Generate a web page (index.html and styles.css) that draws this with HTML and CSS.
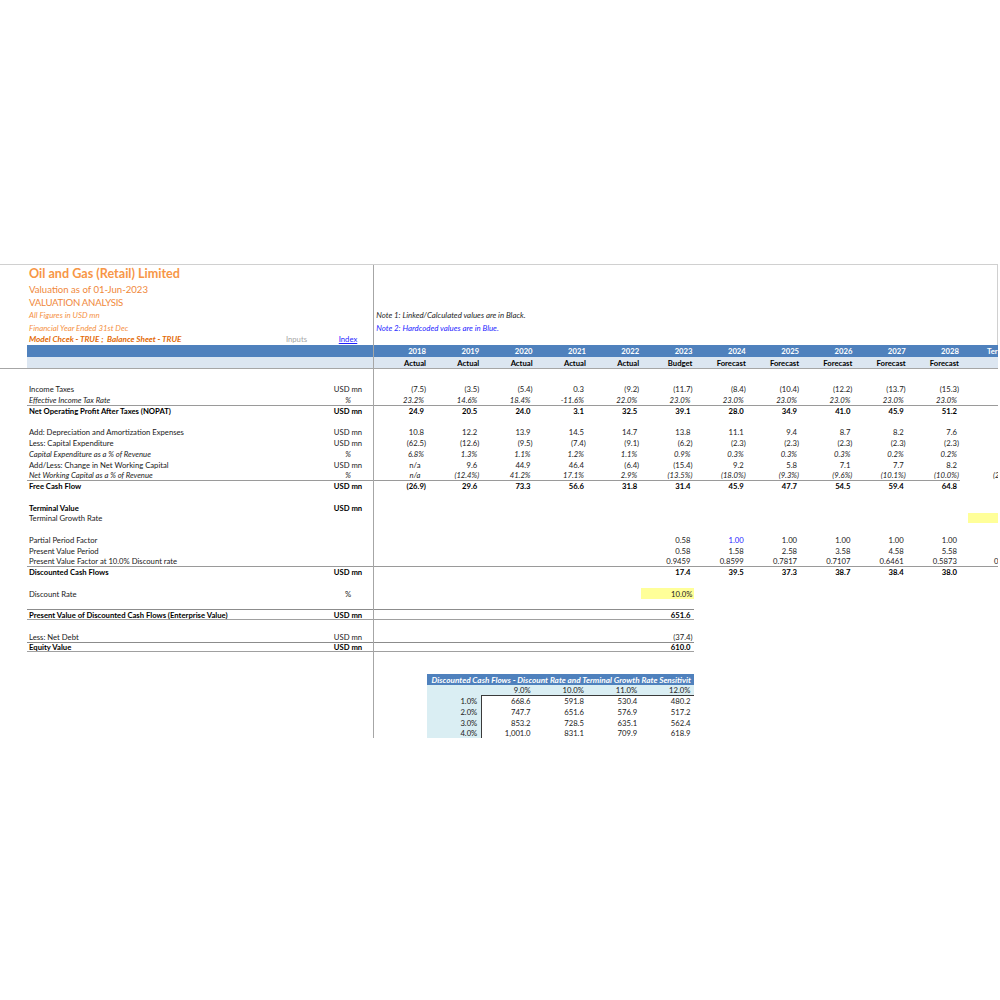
FILE: index.html
```html
<!DOCTYPE html>
<html>
<head>
<meta charset="utf-8">
<title>Oil and Gas (Retail) Limited - Valuation</title>
<link rel="stylesheet" href="styles.css">
</head>
<body>
<div class="sheet">
<table class="grid">
<colgroup>
<col class="ca"><col class="cb"><col class="cc"><col class="cd">
<col class="cy"><col class="cy"><col class="cy"><col class="cy"><col class="cy"><col class="cy"><col class="cy"><col class="cy"><col class="cy"><col class="cy"><col class="cy">
<col class="cs"><col class="ct">
</colgroup>
<tbody>
<tr class="top h18"><td></td><td class="l title">Oil and Gas (Retail) Limited</td><td></td><td class="fz"></td><td colspan="12"></td><td class="edge"></td></tr>
<tr class="top h13"><td></td><td class="l sub">Valuation as of 01-Jun-2023</td><td></td><td class="fz"></td><td colspan="12"></td><td class="edge"></td></tr>
<tr class="top h13"><td></td><td class="l sub caps">VALUATION ANALYSIS</td><td></td><td class="fz"></td><td colspan="12"></td><td class="edge"></td></tr>
<tr class="top h13"><td></td><td class="l info">All Figures in USD mn</td><td></td><td class="fz"></td><td colspan="12" class="note">Note 1: Linked/Calculated values are in Black.</td><td class="edge"></td></tr>
<tr class="top h12"><td></td><td class="l info">Financial Year Ended 31st Dec</td><td></td><td class="fz"></td><td colspan="12" class="note blue">Note 2: Hardcoded values are in Blue.</td><td class="edge"></td></tr>
<tr class="top h11"><td></td><td class="l"><div class="chk"><span class="check">Model Chcek - TRUE ;&nbsp; Balance Sheet - TRUE</span><span class="inputs">Inputs</span></div></td><td class="u"><span class="link">Index</span></td><td class="fz"></td><td colspan="12"></td><td class="edge"></td></tr>
<tr class="band"><td></td><td></td><td></td><td class="fz"></td>
<td class="n m">2018</td><td class="n m">2019</td><td class="n m">2020</td><td class="n m">2021</td><td class="n m">2022</td><td class="n m">2023</td><td class="n m">2024</td><td class="n m">2025</td><td class="n m">2026</td><td class="n m">2027</td><td class="n m">2028</td><td></td><td class="term">Ter</td></tr>
<tr class="band2"><td class="a"></td><td></td><td></td><td class="fz"></td>
<td class="n m">Actual</td><td class="n m">Actual</td><td class="n m">Actual</td><td class="n m">Actual</td><td class="n m">Actual</td><td class="n m">Budget</td><td class="n m">Forecast</td><td class="n m">Forecast</td><td class="n m">Forecast</td><td class="n m">Forecast</td><td class="n m">Forecast</td><td></td><td></td></tr>
<tr class="gap"><td></td><td></td><td></td><td class="fz"></td><td colspan="13"></td></tr>

<tr><td></td><td class="l">Income Taxes</td><td class="u">USD mn</td><td class="fz"></td>
<td class="n m">(7.5)</td><td class="n m">(3.5)</td><td class="n m">(5.4)</td><td class="n">0.3</td><td class="n m">(9.2)</td><td class="n m">(11.7)</td><td class="n m">(8.4)</td><td class="n m">(10.4)</td><td class="n m">(12.2)</td><td class="n m">(13.7)</td><td class="n m">(15.3)</td><td></td><td></td></tr>
<tr class="it"><td></td><td class="l">Effective Income Tax Rate</td><td class="u">%</td><td class="fz"></td>
<td class="n">23.2%</td><td class="n">14.6%</td><td class="n">18.4%</td><td class="n">-11.6%</td><td class="n">22.0%</td><td class="n">23.0%</td><td class="n">23.0%</td><td class="n">23.0%</td><td class="n">23.0%</td><td class="n">23.0%</td><td class="n">23.0%</td><td></td><td></td></tr>
<tr class="b tt"><td class="a"></td><td class="l">Net Operating Profit After Taxes (NOPAT)</td><td class="u">USD mn</td><td class="fz"></td>
<td class="n">24.9</td><td class="n">20.5</td><td class="n">24.0</td><td class="n">3.1</td><td class="n">32.5</td><td class="n">39.1</td><td class="n">28.0</td><td class="n">34.9</td><td class="n">41.0</td><td class="n">45.9</td><td class="n">51.2</td><td></td><td></td></tr>
<tr><td></td><td></td><td></td><td class="fz"></td><td colspan="13"></td></tr>
<tr><td></td><td class="l">Add: Depreciation and Amortization Expenses</td><td class="u">USD mn</td><td class="fz"></td>
<td class="n">10.8</td><td class="n">12.2</td><td class="n">13.9</td><td class="n">14.5</td><td class="n">14.7</td><td class="n">13.8</td><td class="n">11.1</td><td class="n">9.4</td><td class="n">8.7</td><td class="n">8.2</td><td class="n">7.6</td><td></td><td></td></tr>
<tr><td></td><td class="l">Less: Capital Expenditure</td><td class="u">USD mn</td><td class="fz"></td>
<td class="n m">(62.5)</td><td class="n m">(12.6)</td><td class="n m">(9.5)</td><td class="n m">(7.4)</td><td class="n m">(9.1)</td><td class="n m">(6.2)</td><td class="n m">(2.3)</td><td class="n m">(2.3)</td><td class="n m">(2.3)</td><td class="n m">(2.3)</td><td class="n m">(2.3)</td><td></td><td></td></tr>
<tr class="it"><td></td><td class="l">Capital Expenditure as a % of Revenue</td><td class="u">%</td><td class="fz"></td>
<td class="n">6.8%</td><td class="n">1.3%</td><td class="n">1.1%</td><td class="n">1.2%</td><td class="n">1.1%</td><td class="n">0.9%</td><td class="n">0.3%</td><td class="n">0.3%</td><td class="n">0.3%</td><td class="n">0.2%</td><td class="n">0.2%</td><td></td><td></td></tr>
<tr><td></td><td class="l">Add/Less: Change in Net Working Capital</td><td class="u">USD mn</td><td class="fz"></td>
<td class="n na">n/a</td><td class="n">9.6</td><td class="n">44.9</td><td class="n">46.4</td><td class="n m">(6.4)</td><td class="n m">(15.4)</td><td class="n">9.2</td><td class="n">5.8</td><td class="n">7.1</td><td class="n">7.7</td><td class="n">8.2</td><td></td><td></td></tr>
<tr class="it"><td></td><td class="l">Net Working Capital as a % of Revenue</td><td class="u">%</td><td class="fz"></td>
<td class="n na">n/a</td><td class="n m">(12.4%)</td><td class="n">41.2%</td><td class="n">17.1%</td><td class="n">2.9%</td><td class="n m">(13.5%)</td><td class="n m">(18.0%)</td><td class="n m">(9.3%)</td><td class="n m">(9.6%)</td><td class="n m">(10.1%)</td><td class="n m">(10.0%)</td><td></td><td class="cut">(2</td></tr>
<tr class="b tt"><td class="a"></td><td class="l">Free Cash Flow</td><td class="u">USD mn</td><td class="fz"></td>
<td class="n m">(26.9)</td><td class="n">29.6</td><td class="n">73.3</td><td class="n">56.6</td><td class="n">31.8</td><td class="n">31.4</td><td class="n">45.9</td><td class="n">47.7</td><td class="n">54.5</td><td class="n">59.4</td><td class="n">64.8</td><td class="x"></td><td class="x"></td></tr>
<tr><td></td><td></td><td></td><td class="fz"></td><td colspan="13"></td></tr>
<tr class="b"><td></td><td class="l">Terminal Value</td><td class="u">USD mn</td><td class="fz"></td><td colspan="13"></td></tr>
<tr><td></td><td class="l">Terminal Growth Rate</td><td></td><td class="fz"></td>
<td></td><td></td><td></td><td></td><td></td><td></td><td></td><td></td><td></td><td></td><td></td><td></td><td class="hl"></td></tr>
<tr><td></td><td></td><td></td><td class="fz"></td><td colspan="13"></td></tr>
<tr><td></td><td class="l">Partial Period Factor</td><td></td><td class="fz"></td>
<td></td><td></td><td></td><td></td><td></td><td class="n">0.58</td><td class="n blue">1.00</td><td class="n">1.00</td><td class="n">1.00</td><td class="n">1.00</td><td class="n">1.00</td><td></td><td></td></tr>
<tr><td></td><td class="l">Present Value Period</td><td></td><td class="fz"></td>
<td></td><td></td><td></td><td></td><td></td><td class="n">0.58</td><td class="n">1.58</td><td class="n">2.58</td><td class="n">3.58</td><td class="n">4.58</td><td class="n">5.58</td><td></td><td></td></tr>
<tr><td></td><td class="l">Present Value Factor at 10.0% Discount rate</td><td></td><td class="fz"></td>
<td></td><td></td><td></td><td></td><td></td><td class="n">0.9459</td><td class="n">0.8599</td><td class="n">0.7817</td><td class="n">0.7107</td><td class="n">0.6461</td><td class="n">0.5873</td><td></td><td class="cut0">0</td></tr>
<tr class="b tt"><td class="a"></td><td class="l">Discounted Cash Flows</td><td class="u">USD mn</td><td class="fz"></td>
<td></td><td></td><td></td><td></td><td></td><td class="n">17.4</td><td class="n">39.5</td><td class="n">37.3</td><td class="n">38.7</td><td class="n">38.4</td><td class="n">38.0</td><td></td><td></td></tr>
<tr><td></td><td></td><td></td><td class="fz"></td><td colspan="13"></td></tr>
<tr><td></td><td class="l">Discount Rate</td><td class="u">%</td><td class="fz"></td>
<td></td><td></td><td></td><td></td><td></td><td class="n m hl">10.0%</td><td></td><td></td><td></td><td></td><td></td><td></td><td></td></tr>
<tr><td></td><td></td><td></td><td class="fz"></td><td colspan="13"></td></tr>
<tr class="b tb"><td class="a"></td><td class="l">Present Value of Discounted Cash Flows (Enterprise Value)</td><td class="u">USD mn</td><td class="fz"></td>
<td></td><td></td><td></td><td></td><td></td><td class="n">651.6</td><td class="x"></td><td class="x"></td><td class="x"></td><td class="x"></td><td class="x"></td><td class="x"></td><td class="x"></td></tr>
<tr><td></td><td></td><td></td><td class="fz"></td><td colspan="13"></td></tr>
<tr><td></td><td class="l">Less: Net Debt</td><td class="u">USD mn</td><td class="fz"></td>
<td></td><td></td><td></td><td></td><td></td><td class="n m">(37.4)</td><td></td><td></td><td></td><td></td><td></td><td></td><td></td></tr>
<tr class="b tb"><td class="a"></td><td class="l">Equity Value</td><td class="u">USD mn</td><td class="fz"></td>
<td></td><td></td><td></td><td></td><td></td><td class="n">610.0</td><td class="x"></td><td class="x"></td><td class="x"></td><td class="x"></td><td class="x"></td><td class="x"></td><td class="x"></td></tr>
<tr><td></td><td></td><td></td><td class="fz"></td><td colspan="13"></td></tr>
<tr><td></td><td></td><td></td><td class="fz"></td><td colspan="13"></td></tr>

<tr><td></td><td></td><td></td><td class="fz"></td><td></td>
<td colspan="5" class="sens-title"><div class="clip">Discounted Cash Flows - Discount Rate and Terminal Growth Rate Sensitivit</div></td><td colspan="7"></td></tr>
<tr><td></td><td></td><td></td><td class="fz"></td><td></td>
<td class="sh"></td><td class="n sh">9.0%</td><td class="n sh">10.0%</td><td class="n sh">11.0%</td><td class="n sh">12.0%</td><td colspan="7"></td></tr>
<tr><td></td><td></td><td></td><td class="fz"></td><td></td>
<td class="n sh">1.0%</td><td class="n sd tl">668.6</td><td class="n sd t">591.8</td><td class="n sd t">530.4</td><td class="n sd t">480.2</td><td colspan="7"></td></tr>
<tr><td></td><td></td><td></td><td class="fz"></td><td></td>
<td class="n sh">2.0%</td><td class="n sd lft">747.7</td><td class="n sd">651.6</td><td class="n sd">576.9</td><td class="n sd">517.2</td><td colspan="7"></td></tr>
<tr><td></td><td></td><td></td><td class="fz"></td><td></td>
<td class="n sh">3.0%</td><td class="n sd lft">853.2</td><td class="n sd">728.5</td><td class="n sd">635.1</td><td class="n sd">562.4</td><td colspan="7"></td></tr>
<tr><td></td><td></td><td></td><td class="fz"></td><td></td>
<td class="n sh">4.0%</td><td class="n sd lft">1,001.0</td><td class="n sd">831.1</td><td class="n sd">709.9</td><td class="n sd">618.9</td><td colspan="7"></td></tr>
</tbody>
</table>
</div>
</body>
</html>
```

FILE: styles.css
```css
html, body {
  margin: 0;
  padding: 0;
  background: #ffffff;
}

body {
  font-family: Lato, "Liberation Sans", sans-serif;
}

.sheet {
  margin-top: 264px;
  width: 998px;
  height: 474px;
  overflow: hidden;
  border-top: 1px solid #d0d0d0;
}

.grid {
  table-layout: fixed;
  border-collapse: collapse;
  width: 1008px;
}

.ca { width: 27px; }
.cb { width: 303px; }
.cc { width: 36px; }
.cd { width: 8.2px; }
.cy { width: 53.3px; }
.cs { width: 7.5px; }
.ct { width: 40px; }

.grid td {
  padding: 0;
  height: 10.75px;
  line-height: 10px;
  font-size: 7.7px;
  white-space: nowrap;
  color: #1a1a1a;
  vertical-align: bottom;
}

.grid tr.top td { vertical-align: middle; }
.grid tr.h18 td { height: 18px; line-height: 18px; }
.grid tr.h13 td { height: 13px; line-height: 13px; }
.grid tr.h12 td { height: 12px; line-height: 12px; }
.grid tr.h11 td { height: 11px; line-height: 11px; }
.grid tr.gap td { height: 14.6px; }

.grid td.edge {
  background: linear-gradient(to right, transparent 29.5px, #d0d0d0 29.5px, #d0d0d0 30.5px, transparent 30.5px);
}

.grid td.fz { box-shadow: inset -1px 0 0 #a6a6a6; }

.l { padding-left: 2px !important; }
.u { text-align: center; }
.n { text-align: right; padding-right: 3.5px !important; }
.n.m { padding-right: 1.5px !important; }
.n.na { padding-right: 7px !important; }

.grid td.title {
  font-size: 12.6px;
  font-weight: 700;
  color: #f79646;
}

.grid td.sub {
  font-size: 9.6px;
  color: #f0883a;
}

.grid td.caps { letter-spacing: -0.25px; }

.grid td.info {
  font-style: italic;
  font-size: 7.9px;
  color: #f5913f;
}

.grid td.note {
  font-style: italic;
  font-size: 7.9px;
  padding-left: 2px;
  color: #262626;
}

.grid td.blue,
.blue { color: #1f1fff; }

.chk {
  display: flex;
  justify-content: space-between;
  padding-right: 23px;
}

.check {
  font-weight: 700;
  font-style: italic;
  font-size: 8.2px;
  color: #e36c09;
}

.inputs {
  color: #a6a6a6;
  font-size: 7.7px;
}

.link {
  color: #1f1fff;
  text-decoration: underline;
  font-size: 7.7px;
}

/* header bands */
.grid tr.band td {
  height: 12px;
  line-height: 11px;
  background: #4f81bd;
  color: #ffffff;
  font-weight: 700;
}
.grid tr.band td:first-child { background: #ffffff; }

.grid td.term {
  padding-left: 19px;
}

.grid tr.band2 td {
  height: 12px;
  line-height: 11px;
  background: #dce6f1;
  color: #000000;
  font-weight: 700;
  box-shadow: inset 0 -1px 0 #a6a6a6;
}
.grid tr.band2 td.a { background: #ffffff; }
.grid tr.band2 td.fz { box-shadow: inset -1px 0 0 #a6a6a6, inset 0 -1px 0 #a6a6a6; }

/* row styles */
.grid tr.it td { font-style: italic; }
.grid tr.b td { font-weight: 700; color: #000000; }

.grid tr.tt td { box-shadow: inset 0 1px 0 #9a9a9a; }
.grid tr.tb td { box-shadow: inset 0 1px 0 #8c8c8c, inset 0 -1px 0 #a0a0a0; }
.grid tr.tt td.fz { box-shadow: inset -1px 0 0 #a6a6a6, inset 0 1px 0 #9a9a9a; }
.grid tr.tb td.fz { box-shadow: inset -1px 0 0 #a6a6a6, inset 0 1px 0 #8c8c8c, inset 0 -1px 0 #a0a0a0; }
.grid tr.tt td.a,
.grid tr.tb td.a,
.grid tr.tt td.x,
.grid tr.tb td.x { box-shadow: none; }

.hl { background: #ffff99; }

.grid td.cut { padding-left: 25px; }
.grid td.cut0 { padding-left: 26px; }

/* sensitivity table */
.grid td.sens-title {
  background: #4f81bd;
  color: #ffffff;
  font-weight: 700;
  font-style: italic;
  font-size: 8.2px;
  padding-left: 4px;
}
.clip {
  overflow: hidden;
  width: 262px;
  color: #ffffff;
}

.sh { background: #daeef3; }
.sd { background: #ffffff; }
.grid td.tl { box-shadow: inset 1px 1px 0 #3a3a3a; }
.grid td.t { box-shadow: inset 0 1px 0 #3a3a3a; }
.grid td.lft { box-shadow: inset 1px 0 0 #3a3a3a; }
```
